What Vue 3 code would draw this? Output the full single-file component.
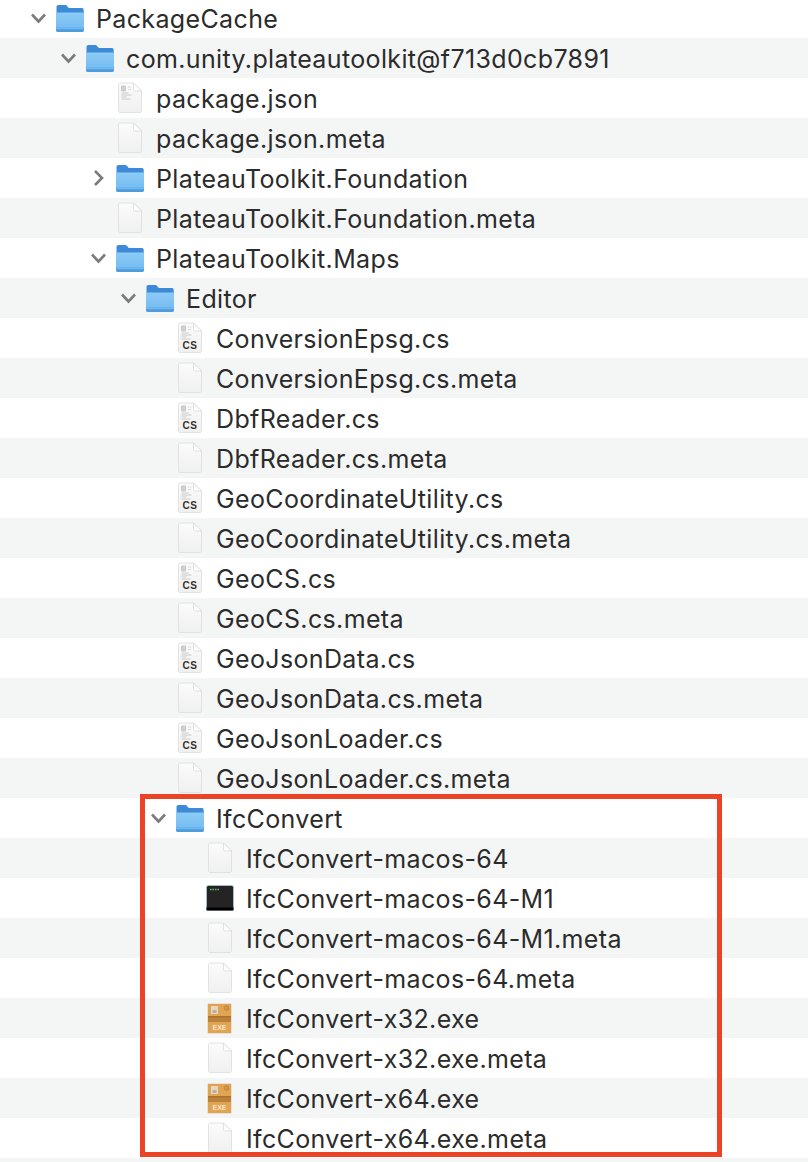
<script setup>
const rows = [
  [0, 'open', 'folder', 'PackageCache'],
  [1, 'open', 'folder', 'com.unity.plateautoolkit@f713d0cb7891'],
  [2, '', 'json', 'package.json'],
  [2, '', 'doc', 'package.json.meta'],
  [2, 'closed', 'folder', 'PlateauToolkit.Foundation'],
  [2, '', 'doc', 'PlateauToolkit.Foundation.meta'],
  [2, 'open', 'folder', 'PlateauToolkit.Maps'],
  [3, 'open', 'folder', 'Editor'],
  [4, '', 'cs', 'ConversionEpsg.cs'],
  [4, '', 'doc', 'ConversionEpsg.cs.meta'],
  [4, '', 'cs', 'DbfReader.cs'],
  [4, '', 'doc', 'DbfReader.cs.meta'],
  [4, '', 'cs', 'GeoCoordinateUtility.cs'],
  [4, '', 'doc', 'GeoCoordinateUtility.cs.meta'],
  [4, '', 'cs', 'GeoCS.cs'],
  [4, '', 'doc', 'GeoCS.cs.meta'],
  [4, '', 'cs', 'GeoJsonData.cs'],
  [4, '', 'doc', 'GeoJsonData.cs.meta'],
  [4, '', 'cs', 'GeoJsonLoader.cs'],
  [4, '', 'doc', 'GeoJsonLoader.cs.meta'],
  [4, 'open', 'folder', 'IfcConvert'],
  [5, '', 'doc', 'IfcConvert-macos-64'],
  [5, '', 'term', 'IfcConvert-macos-64-M1'],
  [5, '', 'doc', 'IfcConvert-macos-64-M1.meta'],
  [5, '', 'doc', 'IfcConvert-macos-64.meta'],
  [5, '', 'exe', 'IfcConvert-x32.exe'],
  [5, '', 'doc', 'IfcConvert-x32.exe.meta'],
  [5, '', 'exe', 'IfcConvert-x64.exe'],
  [5, '', 'doc', 'IfcConvert-x64.exe.meta'],
  [5, 'none', 'none', '']
].map(([level, chevron, icon, name]) => ({ level, chevron, icon, name }))
</script>

<template>
  <div class="finder">
    <svg class="defs" width="0" height="0" aria-hidden="true">
      <defs>
        <linearGradient id="folderBody" x1="0" y1="0" x2="0" y2="1">
          <stop offset="0" stop-color="#8ccbf6" />
          <stop offset="1" stop-color="#70b9f0" />
        </linearGradient>
        <linearGradient id="paper" x1="0" y1="0" x2="0" y2="1">
          <stop offset="0" stop-color="#fbfbfb" />
          <stop offset="1" stop-color="#f0f0f0" />
        </linearGradient>
        <symbol id="i-folder" viewBox="0 0 30 30">
          <path d="M1.500 9V4C1.500 2.800 2.300 2 3.500 2H10C11 2 11.500 2.500 12.300 3.300L13.800 5H27C28 5 28.700 5.800 28.700 7V11H1.500Z" fill="#3d8bd6" />
          <path d="M1 11C1 10.200 1.700 9.500 2.500 9.500H27.500C28.300 9.500 29 10.200 29 11V27C29 28.200 28.200 29 27 29H3C1.800 29 1 28.200 1 27Z" fill="url(#folderBody)" />
          <path d="M1 26.300H29V27C29 28.200 28.200 29 27 29H3C1.800 29 1 28.200 1 27Z" fill="#4f9ddd" />
          <path d="M1 24.800H29" stroke="#5fabe8" stroke-width=".7" />
        </symbol>
        <symbol id="i-page" viewBox="0 0 30 32">
          <path d="M3.500 2.500C3.500 1.700 4.200 1 5 1H18.500L26.500 9V29C26.500 29.800 25.800 30.500 25 30.500H5C4.200 30.500 3.500 29.800 3.500 29Z" fill="url(#paper)" stroke="#dcdcdc" stroke-width=".8" />
          <path d="M18.500 1V7.500C18.500 8.300 19.200 9 20 9H26.500Z" fill="#fff" stroke="#d5d5d5" stroke-width=".7" />
        </symbol>
        <symbol id="i-lines" viewBox="0 0 30 32">
          <path d="M6.500 4h4v5h-4zM6.500 11h7M6.500 13h10M6.500 15h5M6.500 17h9" fill="#d0d0d0" stroke="#cacaca" stroke-width="1" />
          <path d="M13 5h3M13 7.500h3" stroke="#dcdcdc" stroke-width="1" />
        </symbol>
      </defs>
    </svg>

    <div class="list">
      <div
        v-for="(row, i) in rows"
        :key="i"
        class="row"
        :style="{ paddingLeft: 30 + row.level * 30 + 'px' }"
      >
        <span class="twist">
          <svg v-if="row.chevron === 'open'" width="17" height="12" viewBox="0 0 17 12">
            <path d="M2 2.500L8.500 9.500L15 2.500" class="chev" />
          </svg>
          <svg v-else-if="row.chevron === 'closed'" width="17" height="18" viewBox="0 0 17 18">
            <path d="M5 2L12 9L5 16" class="chev" />
          </svg>
        </span>
        <span class="glyph">
          <svg v-if="row.icon === 'folder'" width="30" height="30"><use href="#i-folder" /></svg>
          <svg v-else-if="row.icon === 'doc'" width="30" height="32"><use href="#i-page" /></svg>
          <svg v-else-if="row.icon === 'json'" width="30" height="32">
            <use href="#i-page" /><use href="#i-lines" />
          </svg>
          <svg v-else-if="row.icon === 'cs'" width="30" height="32" viewBox="0 0 30 32">
            <use href="#i-page" width="30" height="32" /><use href="#i-lines" width="30" height="32" />
            <text x="15" y="27" text-anchor="middle" class="cs">CS</text>
          </svg>
          <svg v-else-if="row.icon === 'term'" width="30" height="30" viewBox="0 0 30 30">
            <rect x="1.500" y="2.500" width="27" height="25" rx="2" fill="#242424" stroke="#a9c4cf" stroke-width=".8" />
            <path d="M1.500 26h27" stroke="#000" stroke-width="3" />
            <path d="M5 6.500h1.500M7.500 6.500h1.500M10 6.500h1.500M12.500 6.500h1.500" stroke="#5fbf55" stroke-width="1.500" />
          </svg>
          <svg v-else-if="row.icon === 'exe'" width="30" height="32" viewBox="0 0 30 32">
            <rect x="3" y="2" width="23" height="29" fill="#e1a552" stroke="#d2a36c" stroke-width=".5" />
            <rect x="3" y="14" width="23" height="6" fill="#bd823a" />
            <rect x="3" y="14" width="23" height="1.500" fill="#a9712d" />
            <rect x="6" y="4" width="7" height="8" fill="#e8d7c0" />
            <rect x="7.500" y="8" width="4" height="3" fill="#b7b0a5" />
            <circle cx="21.500" cy="6" r="2.500" fill="#cd9248" stroke="#bd823a" stroke-width=".6" />
            <text x="14.500" y="28" text-anchor="middle" class="exe">EXE</text>
          </svg>
        </span>
        <span class="name">{{ row.name }}</span>
      </div>
    </div>

    <div class="callout"></div>
  </div>
</template>

<style scoped>
.finder {
  position: relative;
  width: 808px;
  height: 1162px;
  overflow: hidden;
  background: #fff;
  font-family: Inter, "Liberation Sans", sans-serif;
}
.defs {
  position: absolute;
}
.list {
  margin-top: -2px;
}
.row {
  height: 40px;
  display: flex;
  align-items: center;
  box-sizing: border-box;
}
.row:nth-child(even) {
  background: #f4f5f5;
}
.twist {
  width: 17px;
  margin-right: 8px;
  flex: none;
  display: flex;
  align-items: center;
  justify-content: center;
}
.chev {
  fill: none;
  stroke: #7b7b7b;
  stroke-width: 2.6;
}
.glyph {
  width: 30px;
  height: 32px;
  margin-right: 11px;
  flex: none;
  display: flex;
  align-items: center;
}
.name {
  font-size: 25px;
  letter-spacing: 0.36px;
  padding-top: 2px;
  color: #2b2b2b;
  white-space: nowrap;
}
.cs {
  font-family: "Liberation Sans", sans-serif;
  font-size: 10px;
  font-weight: 700;
  fill: #333;
  letter-spacing: .5px;
}
.exe {
  font-family: "Liberation Sans", sans-serif;
  font-size: 7px;
  font-weight: 700;
  fill: #f6e7cf;
}
.callout {
  position: absolute;
  left: 140px;
  top: 794px;
  width: 582px;
  height: 363px;
  box-sizing: border-box;
  border: 5px solid #ec4225;
}
</style>
